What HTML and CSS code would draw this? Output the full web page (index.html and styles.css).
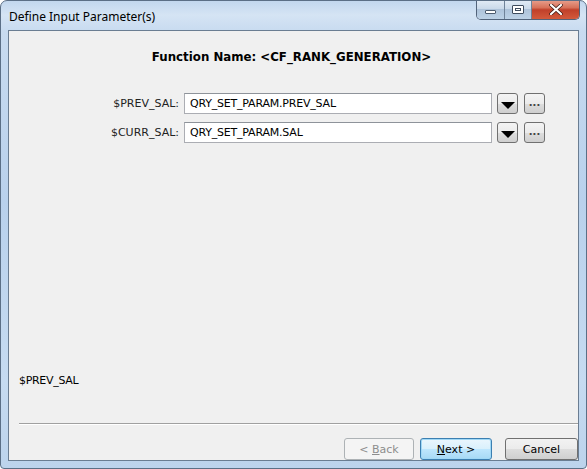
FILE: index.html
```html
<!DOCTYPE html>
<html lang="en">
<head>
  <meta charset="UTF-8" />
  <title>Define Input Parameter(s)</title>
  <link rel="stylesheet" href="styles.css">
</head>
<body>
  <div class="window">
    <!-- Title bar -->
    <div class="titlebar">
      <span class="title">Define Input Parameter(s)</span>
      <div class="caption">
        <div class="cap-btn cap-min"><span class="min-glyph"></span></div>
        <div class="cap-btn cap-max"><span class="max-glyph"></span></div>
        <div class="cap-btn cap-close">
          <svg width="14" height="11" viewBox="0 0 14 11">
            <path d="M2 1 L12 10 M12 1 L2 10" stroke="#3a1a14" stroke-width="3.6" stroke-linecap="round"/>
            <path d="M2 1 L12 10 M12 1 L2 10" stroke="#ffffff" stroke-width="2.2" stroke-linecap="round"/>
          </svg>
        </div>
      </div>
    </div>

    <!-- Client area -->
    <div class="client">
      <h1 class="func-name">Function Name: &lt;CF_RANK_GENERATION&gt;</h1>

      <div class="params">
        <div class="param-row">
          <label class="param-label">$PREV_SAL:</label>
          <div class="param-input">QRY_SET_PARAM.PREV_SAL</div>
          <button class="drop-btn"><span class="arrow"></span></button>
          <button class="more-btn">...</button>
        </div>
        <div class="param-row">
          <label class="param-label">$CURR_SAL:</label>
          <div class="param-input">QRY_SET_PARAM.SAL</div>
          <button class="drop-btn"><span class="arrow"></span></button>
          <button class="more-btn">...</button>
        </div>
      </div>

      <div class="spacer"></div>

      <div class="status">$PREV_SAL</div>
      <div class="separator"></div>

      <div class="footer">
        <button class="btn" disabled>&lt; <u>B</u>ack</button>
        <button class="btn btn-default"><u>N</u>ext &gt;</button>
        <button class="btn btn-cancel">Cancel</button>
      </div>
    </div>
  </div>
</body>
</html>
```

FILE: styles.css
```css
* {
  box-sizing: border-box;
  margin: 0;
  padding: 0;
}

body {
  background: #ffffff;
  font-family: 'DejaVu Sans', Verdana, sans-serif;
  font-size: 11px;
  color: #000;
}

/* Window frame */
.window {
  width: 587px;
  height: 469px;
  border: 1px solid #5b6f86;
  border-radius: 7px 7px 4px 4px;
  background: linear-gradient(180deg, #c2d7ee 0px, #d5e4f4 14px, #c8dbf0 30px, #b9d1ec 200px, #c6dbf1 380px, #bcd3ec 469px);
  padding: 0 7px 7px 7px;
  display: flex;
  flex-direction: column;
  overflow: hidden;
}

.titlebar {
  height: 29px;
  display: flex;
  align-items: flex-start;
  justify-content: space-between;
}

.title {
  font-family: 'Noto Sans', 'Open Sans', sans-serif;
  font-size: 12px;
  color: #000;
  padding-top: 7px;
  padding-left: 1px;
}

.caption {
  display: flex;
  margin-top: -1px;
  margin-right: -1px;
  height: 20px;
  border: 1px solid #52637a;
  border-top: none;
  border-radius: 0 0 5px 5px;
  overflow: hidden;
}

.cap-btn {
  height: 19px;
  display: flex;
  align-items: center;
  justify-content: center;
}

.cap-min,
.cap-max {
  width: 27px;
  background: linear-gradient(180deg, #e3ecf6 0%, #cbdaea 45%, #aec3da 50%, #bcd1e6 100%);
  border-right: 1px solid #6f8298;
}

.cap-min {
  width: 28px;
}

.min-glyph {
  width: 11px;
  height: 4px;
  margin-top: 5px;
  background: #fff;
  border: 1px solid #4c5b6e;
  border-radius: 1px;
}

.max-glyph {
  width: 12px;
  height: 9px;
  border: 1px solid #3e4c5e;
  background: #fff;
  box-shadow: inset 0 0 0 2px #fff, inset 0 0 0 3px #3e4c5e;
  border-radius: 1px;
}

.cap-close {
  width: 47px;
  background: linear-gradient(180deg, #e8a18f 0%, #d7725a 40%, #c0402a 52%, #d35a3c 100%);
}

/* Client area */
.client {
  flex: 1;
  background: #f0f0f0;
  border: 1px solid #6a7d92;
  display: flex;
  flex-direction: column;
}

.func-name {
  font-family: 'DejaVu Sans', Verdana, sans-serif;
  font-size: 11.8px;
  font-weight: bold;
  text-align: center;
  line-height: 16px;
  margin-top: 18px;
  padding-right: 4px;
}

.params {
  margin-top: 28px;
  display: flex;
  flex-direction: column;
  gap: 8px;
}

.param-row {
  display: flex;
  align-items: center;
  height: 21px;
}

.param-label {
  width: 175px;
  text-align: right;
  font-size: 11px;
  color: #222;
  padding-right: 5px;
}

.param-input {
  width: 308px;
  height: 21px;
  background: #fff;
  border: 1px solid #abadb3;
  border-top-color: #8e939a;
  padding: 0 5px;
  line-height: 19px;
  font-size: 11px;
  color: #000;
  letter-spacing: -0.2px;
}

.drop-btn,
.more-btn {
  height: 21px;
  border: 1px solid #707070;
  border-radius: 3px;
  background: linear-gradient(180deg, #f4f4f4 0%, #ebebeb 50%, #dddddd 51%, #cfcfcf 100%);
  display: flex;
  align-items: center;
  justify-content: center;
}

.drop-btn {
  width: 21px;
  margin-left: 5px;
}

.arrow {
  width: 0;
  height: 0;
  margin-top: 3px;
  border-left: 7px solid transparent;
  border-right: 7px solid transparent;
  border-top: 7px solid #000;
}

.more-btn {
  width: 21px;
  margin-left: 6px;
  font-family: 'DejaVu Sans', sans-serif;
  font-size: 10px;
  font-weight: bold;
  color: #444;
  line-height: 14px;
  padding-bottom: 2px;
}

.spacer {
  flex: 1;
}

.status {
  margin-left: 10px;
  font-size: 11px;
  color: #000;
  line-height: 14px;
  letter-spacing: -0.3px;
}

.separator {
  margin: 35px 0 0 10px;
  height: 2px;
  border-top: 1px solid #a0a0a0;
  border-bottom: 1px solid #ffffff;
}

.footer {
  display: flex;
  justify-content: flex-end;
  padding: 13px 0 0 0;
  height: 35px;
}

.btn {
  width: 70px;
  height: 22px;
  margin-left: 6px;
  font-family: 'DejaVu Sans', Verdana, sans-serif;
  font-size: 11px;
  color: #000;
  border: 1px solid #707070;
  border-radius: 3px;
  background: linear-gradient(180deg, #f2f2f2 0%, #ebebeb 50%, #dddddd 51%, #cfcfcf 100%);
}

.btn:disabled {
  color: #8d8d8d;
  border-color: #adb2b5;
  background: #f4f4f4;
}

.btn-default {
  width: 72px;
  margin-left: 6px;
  border-color: #3c7fb1;
  background: linear-gradient(180deg, #eaf6fd 0%, #d9f0fc 50%, #bee6fd 51%, #a7d9f5 100%);
  box-shadow: inset 0 0 0 1px #a0d8f6;
}

.btn-cancel {
  width: 73px;
  margin-left: 13px;
}
```
